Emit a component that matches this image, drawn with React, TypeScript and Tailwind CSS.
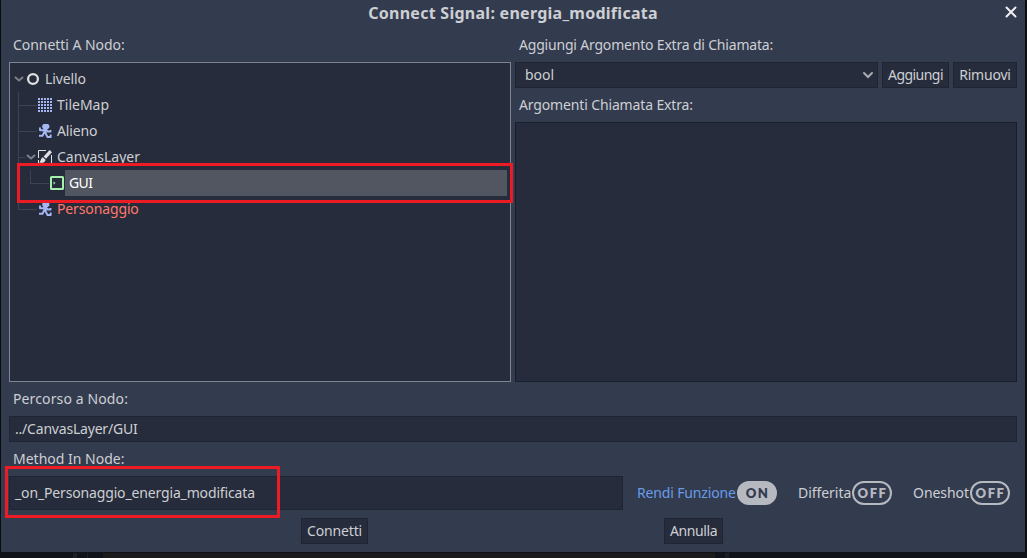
import type { ReactNode } from "react";

const field = "border border-[#1f2632] bg-[#262c3b]";

function Label({ children, className = "" }: { children: ReactNode; className?: string }) {
  return <div className={`flex h-[34px] shrink-0 items-center pb-0.5 pl-1 whitespace-nowrap ${className}`}>{children}</div>;
}

function Button({ children, className }: { children: ReactNode; className: string }) {
  return (
    <button className={`${field} ${className} flex h-[26px] shrink-0 items-center justify-center pb-0.5 whitespace-nowrap`}>
      {children}
    </button>
  );
}

function Chevron({ className }: { className: string }) {
  return (
    <svg viewBox="0 0 12 8" className={`h-2 w-3 shrink-0 ${className}`} fill="none" stroke="currentColor" strokeWidth="2" strokeLinecap="round">
      <path d="M2.500 2.500l3.500 3 3.500-3" />
    </svg>
  );
}

function BodyIcon() {
  return (
    <svg viewBox="0 0 16 16" className="size-4 shrink-0" fill="none" stroke="#a5b7f3" strokeWidth="1.900" strokeLinejoin="round">
      <path d="M6.500 1h4.500L12.300 2.300V4.500L11 6h-4.500L5.300 4.800V2.200z" fill="#a5b7f3" stroke="none" />
      <path d="M3 4.500v2.800h4l2-.8 1.800 2h2.700V7" />
      <path d="M6.500 5.500h3l.2 4.500-3.400.5z" fill="#a5b7f3" stroke="none" />
      <path d="M7 9.500L5.500 12.800H2M8.300 9.800l2.200 4.200h3.200v-2.500" />
    </svg>
  );
}

function TileIcon() {
  const steps = [1, 4, 7, 10, 13];
  return (
    <svg viewBox="0 0 16 16" className="size-4 shrink-0" fill="#a5b7f3" shapeRendering="crispEdges">
      {steps.map((y) => steps.map((x) => <rect key={`${x}-${y}`} x={x} y={y} width="2" height="2" />))}
    </svg>
  );
}

function CanvasIcon() {
  return (
    <svg viewBox="0 0 16 16" className="size-4 shrink-0" fill="none" stroke="#e0e0e0">
      <path d="M9 1.500H1.500V9M1.500 11v3.500H3M10 14.500h4.500V6" />
      <path d="M13.800 2.200L7.800 8.700" strokeWidth="3.200" />
      <path d="M5.800 8.300l2.700 2.500C8.300 13.600 5.500 14.300 2.300 13.600 4 12.500 3.700 9 5.800 8.300z" fill="#e0e0e0" stroke="none" />
    </svg>
  );
}

function Toggle({ on }: { on?: boolean }) {
  return (
    <span
      className={`flex h-6 w-10 shrink-0 items-center justify-center rounded-full border-2 border-[#b7b9c0] pl-px font-['Lato',sans-serif] text-[13px] leading-none font-extrabold ${
        on ? "bg-[#b7b9c0] tracking-[1.3px] text-[#333b4f]" : "tracking-[1.5px] text-[#b7b9c0]"
      }`}
    >
      {on ? "ON" : "OFF"}
    </span>
  );
}

function Row({ pad, children }: { pad: string; children: ReactNode }) {
  return <div className={`flex h-[26px] items-center whitespace-nowrap ${pad}`}>{children}</div>;
}

function Name({ children, className = "" }: { children: ReactNode; className?: string }) {
  return <span className={`ml-1 pb-0.5 ${className}`}>{children}</span>;
}

export default function App() {
  return (
    <div className="relative flex h-[558px] w-[1027px] flex-col overflow-hidden bg-[#101218] font-['Noto_Sans',sans-serif] text-[14px] leading-[19px] text-[#cdcfd3]">
      <main className="ml-px flex h-[552px] w-[1024px] shrink-0 flex-col bg-[#333b4f] px-2 shadow-[0_1px_3px_#000]">
        <header className="relative flex h-7 shrink-0 items-center justify-center pb-px text-[16px] font-bold">
          <h1 className="tracking-[0.27px] whitespace-nowrap">Connect Signal: energia_modificata</h1>
          <svg viewBox="0 0 12 12" className="absolute top-[6px] right-0 size-3" stroke="#f0f0f0" strokeWidth="2" strokeLinecap="round">
            <path d="M1.500 1.500l9 9M10.500 1.500l-9 9" />
          </svg>
        </header>
        <section className="flex h-[354px] shrink-0 gap-1">
          <div className="flex w-[502px] flex-col">
            <Label className="tracking-[-0.05px]">Connetti A Nodo:</Label>
            <div className="relative h-[320px] border border-[#7f8590] bg-[#262c3b] pt-[3px]">
              <svg className="absolute top-0 left-0 h-[160px] w-[60px]" viewBox="10 63 60 160" fill="none" stroke="#3d4351" shapeRendering="crispEdges">
                <path d="M18.500 92v117.500h18.500M18.500 105.500H37M18.500 131.500H37M18.500 157.500H25M30.500 170v13.500H49" />
              </svg>
              <Row pad="pl-[3px]">
                <Chevron className="mr-px text-[#7d818b]" />
                <svg viewBox="0 0 16 16" className="-ml-0.5 size-4 shrink-0" fill="none" stroke="#e0e0e0" strokeWidth="2.300">
                  <circle cx="9" cy="8" r="4.900" />
                </svg>
                <Name className="pl-px tracking-[-0.1px]">Livello</Name>
              </Row>
              <Row pad="pl-[27px]"><TileIcon /><Name>TileMap</Name></Row>
              <Row pad="pl-[27px]"><BodyIcon /><Name className="tracking-[-0.15px]">Alieno</Name></Row>
              <Row pad="pl-[15px]">
                <Chevron className="text-[#7d818b]" />
                <CanvasIcon />
                <Name>CanvasLayer</Name>
              </Row>
              <Row pad="pl-[39px]">
                <svg viewBox="0 0 16 16" className="size-4 shrink-0" fill="none" stroke="#a5efac" strokeWidth="2">
                  <rect x="2" y="2" width="12" height="12" rx="0.5" />
                  <path d="M4.500 6.500l2 1.500-2 1.500z" fill="#a5efac" stroke="none" />
                </svg>
                <span className="flex h-[26px] w-[442px] items-center bg-[#525660] pb-0.5 pl-1 tracking-[-0.6px] text-white">GUI</span>
              </Row>
              <Row pad="pl-[27px]"><BodyIcon /><Name className="tracking-[-0.13px] text-[#ff786b]">Personaggio</Name></Row>
              <div className="absolute top-[100px] left-[7px] h-10 w-[496px] border-3 border-[#ed1c24]" />
            </div>
          </div>
          <div className="flex w-[502px] flex-col">
            <Label className="tracking-[-0.19px]">Aggiungi Argomento Extra di Chiamata:</Label>
            <div className="flex gap-1">
              <div className={`${field} flex h-[26px] w-[363px] items-center justify-between pr-[3px] pl-[9px]`}>
                <span className="pb-0.5">bool</span>
                <svg viewBox="0 0 12 8" className="h-2 w-3 shrink-0" fill="none" stroke="#a9acb3" strokeWidth="2" strokeLinecap="round">
                  <path d="M2 2l4 4 4-4" />
                </svg>
              </div>
              <Button className="w-[67px] tracking-[-0.55px]">Aggiungi</Button>
              <Button className="w-[64px] tracking-[-0.2px]">Rimuovi</Button>
            </div>
            <Label className="tracking-[-0.14px]">Argomenti Chiamata Extra:</Label>
            <div className="h-[260px] border border-[#191f2a] bg-[#262c3b]" />
          </div>
        </section>
        <Label className="tracking-[0.12px]">Percorso a Nodo:</Label>
        <div className={`${field} flex h-[26px] w-[1008px] shrink-0 items-center pb-0.5 pl-[5px] tracking-[-0.2px]`}>../CanvasLayer/GUI</div>
        <Label>Method In Node:</Label>
        <section className="relative flex h-[34px] shrink-0 items-center">
          <div className={`${field} flex h-[34px] w-[614px] items-center pb-0.5 pl-[5px] tracking-[-0.15px]`}>_on_Personaggio_energia_modificata</div>
          <div className="ml-[14px] flex w-[140px] items-center justify-between whitespace-nowrap text-[#699ce8]">
            <span className="pb-0.5 tracking-[-0.15px]">Rendi Funzione</span>
            <Toggle on />
          </div>
          <div className="ml-[21px] flex w-[94px] items-center justify-between">
            <span className="pb-0.5 tracking-[-0.05px]">Differita</span>
            <Toggle />
          </div>
          <div className="ml-[21px] flex w-[97px] items-center justify-between">
            <span className="pb-0.5 tracking-[-0.05px]">Oneshot</span>
            <Toggle />
          </div>
          <div className="absolute -top-[10px] -left-1 h-[52px] w-[275px] border-3 border-[#ed1c24]" />
        </section>
        <footer className="mt-2 flex shrink-0">
          <Button className="ml-[292px] w-[67px] tracking-[-0.15px]">Connetti</Button>
          <Button className="ml-[296px] w-[59px] tracking-[-0.4px]">Annulla</Button>
        </footer>
      </main>
      <div className="flex h-[6px] shrink-0 bg-[#10131a] pt-px">
        <span className="w-[73px]" />
        <span className="w-[4px] bg-[#1c202b]" />
        <span className="w-[10px]" />
        <span className="w-px bg-[#1c202b]" />
        <span className="w-[15px]" />
        <span className="w-[612px] bg-[#1b1b1b]" />
        <span className="w-[10px]" />
        <span className="w-[4px] bg-[#1a1e29]" />
      </div>
    </div>
  );
}
